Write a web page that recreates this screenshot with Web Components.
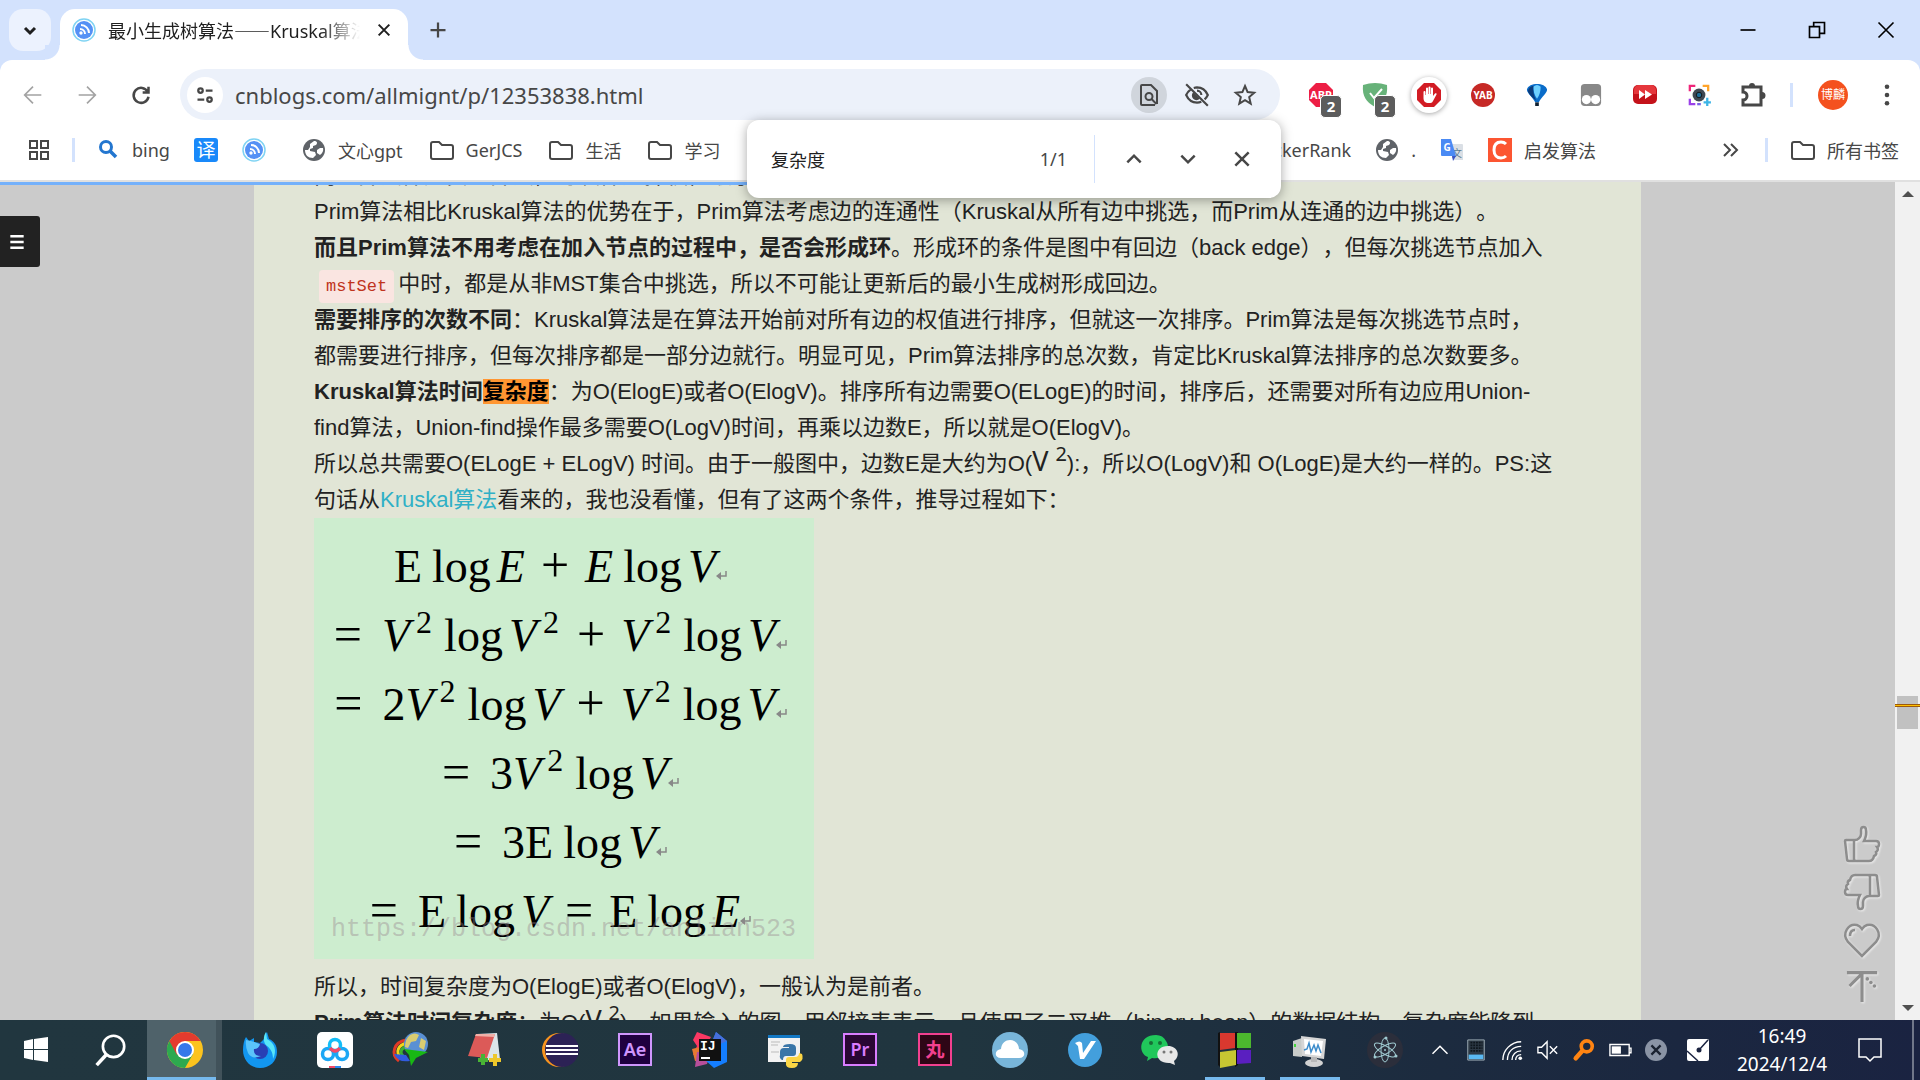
<!DOCTYPE html>
<html lang="zh-CN">
<head>
<meta charset="utf-8">
<title>最小生成树算法——Kruskal算法</title>
<style>
  html, body {
    margin: 0;
    height: 100%;
  }
  body {
    overflow: hidden;
    font-family: "Noto Sans", "Noto Sans CJK SC", sans-serif;
    font-size: 18px;
    color: #1f1f1f;
  }
  .dash {
    font-family: "Noto Sans CJK SC", sans-serif;
  }
</style>
</head>
<body>
<desktop-screen>
  <tab-strip>
    <browser-tab>最小生成树算法<span class="dash">——</span>Kruskal算法</browser-tab>
  </tab-strip>
  <nav-toolbar></nav-toolbar>
  <bookmarks-bar></bookmarks-bar>
  <find-bar></find-bar>
  <page-view>
    <blog-post></blog-post>
  </page-view>
  <task-bar></task-bar>
</desktop-screen>

<script>
(function() {
  // every icon: [viewBox size, markup]
  const line = (w, d) => `<path d="${d}" fill="none" stroke="currentColor" stroke-width="${w}"/>`;
  const icons = {
    chevron: [24, line(3, 'M7 10l5 5 5-5')],
    up: [24, line(3, 'M4 16l8-8 8 8')],
    down: [24, line(3, 'M4 8l8 8 8-8')],
    close: [24, line(3, 'M4 4l16 16M20 4L4 20')],
    winclose: [24, line(2, 'M3 3l18 18M21 3L3 21')],
    plus: [24, line(3, 'M12 2v20M2 12h20')],
    minimize: [24, line(2, 'M3 12h18')],
    restore: [24, line(2, 'M3 8h12v13H3zM8 8V3h13v13h-5')],
    back: [24, line(2, 'M22 12H3M12 2L2 12l10 10')],
    forward: [24, line(2, 'M2 12h19M12 2l10 10-10 10')],
    reload: [24, line(3, 'M20 8a9 9 0 1 0 1 6M21 2v7h-7')],
    tune: [24, line(3, 'M13 6h9M2 18h9') + '<g fill="none" stroke="currentColor" stroke-width="3"><circle cx="6" cy="6" r="3"/><circle cx="18" cy="18" r="3"/></g>'],
    findpage: [24, line(2, 'M18 22H5a1 1 0 0 1-1-1V3a1 1 0 0 1 1-1h9l6 6v13M14.500 16l5 5') + '<circle cx="12" cy="13.500" r="3.500" fill="none" stroke="currentColor" stroke-width="2"/>'],
    eyeoff: [24, line(2, 'M2 2l20 20M9 5.500a11 11 0 0 1 3-.5c4.500 0 8 2.600 10 7a12 12 0 0 1-3 4M6 7a12 12 0 0 0-4 5c2 4.400 5.500 7 10 7a11 11 0 0 0 4-.8M12 8a4 4 0 0 1 4 4') + '<path d="M8.500 9.500a4 4 0 0 0 6 6z" fill="currentColor"/>'],
    star: [24, line(2, 'M12 3l2.600 6.100 6.600.6-5 4.400 1.500 6.500L12 17.200l-5.700 3.400 1.500-6.500-5-4.400 6.600-.6z')],
    apps: [24, line(2, 'M3 3h7v7H3zM14 3h7v7h-7zM3 14h7v7H3zM14 14h7v7h-7z')],
    folder: [24, line(2, 'M1 19V6a2 2 0 0 1 2-2h6l3 3h9a2 2 0 0 1 2 2v10a2 2 0 0 1-2 2H3a2 2 0 0 1-2-2z')],
    globe: [24, '<circle cx="12" cy="12" r="11" fill="#5f6368"/><path d="M12 3c3 0 4 2 2 4l-3 1v2l-3 1v2l5 1 1 3-3 3c-5 0-8-3-8-8h3l2-3V6zM15 12l3-2h3q1 4-3 7l-3-2z" fill="#fff"/>'],
    bing: [24, '<circle cx="10" cy="9" r="5.500" fill="none" stroke="#2376cf" stroke-width="3"/><path d="M14 13l6 6" stroke="#2376cf" stroke-width="3.500"/>'],
    translate: [24, '<rect width="24" height="24" rx="3" fill="#1989fa"/><text x="12" y="19" font-size="19" text-anchor="middle" fill="#fff">译</text>'],
    feed: [24, '<circle cx="12" cy="12" r="11" fill="#fff" stroke="#7fd3f3" stroke-width="1.500"/><circle cx="12" cy="12" r="9" fill="#5591f5"/><g fill="none" stroke="#fff" stroke-width="2"><path d="M8 11a5 5 0 0 1 5 5M9 7a8 8 0 0 1 8 8"/></g><circle cx="9" cy="15" r="1.700" fill="#fff"/>'],
    gtranslate: [24, '<path d="M9 6h13a1 1 0 0 1 1 1v15H13z" fill="#dadfe5"/><text x="17" y="19" font-size="10" text-anchor="middle" fill="#5b7b90">文</text><path d="M1 1h10l5 17H2a1 1 0 0 1-1-1z" fill="#4a8af4"/><path d="M12 18h4l-3 5z" fill="#3a54c4"/><text x="7" y="13" font-size="10" font-weight="700" text-anchor="middle" fill="#fff">G</text>'],
    cbox: [24, '<path fill="#fc5531" d="M0 0h24v24H0z"/><path d="M18 6q-2-2-5-2c-5 0-7 3-7 8s3 8 7 8q3 0 5-2" fill="none" stroke="#fff" stroke-width="3"/>'],
    more: [24, line(2, 'M6 6l6 6-6 6M13 6l6 6-6 6')],
    dots: [24, '<g fill="currentColor"><circle cx="12" cy="3" r="2.500"/><circle cx="12" cy="12" r="2.500"/><circle cx="12" cy="21" r="2.500"/></g>'],
    abp: [24, '<path d="M7 0h10l7 7v10l-7 7H7l-7-7V7z" fill="#ed1e45"/><text x="12" y="16" font-size="11" font-weight="700" text-anchor="middle" fill="#fff">ABP</text>'],
    shield: [24, '<path d="M0 2q12-4 24 0c1 11-3 17-12 22C3 19-1 13 0 2z" fill="#67b279"/><path d="M7 10l4 5 8-9" fill="none" stroke="#fff" stroke-width="2"/>'],
    hand: [24, '<path d="M7 0h10l7 7v10l-7 7H7l-7-7V7z" fill="#d21c24" /><path d="M6.500 12.500V9a1 1 0 0 1 2 0v3h.5V5.500a1 1 0 0 1 2 0V11h.5V4.500a1 1 0 0 1 2 0V11h.5V5.500a1 1 0 0 1 2 0V13l2-2.500c1-.8 2 0 1.500 1L16 18c-1 2-2 2-4 2-4 0-5.500-2-5.500-5z" fill="#fff"/>'],
    yab: [24, '<circle cx="12" cy="12" r="12" fill="#c62926"/><text x="12" y="16" font-size="10" font-weight="700" text-anchor="middle" fill="#fff">YAB</text>'],
    balloon: [24, '<path d="M1 6c2-8 20-8 22 0 0 4-6 8-9 14h-4C7 14 1 10 1 6z" fill="#0a6cc9"/><path d="M8 3q4-4 8 0 0 8-4 13Q8 11 8 3z" fill="#6ed0ff"/><path d="M2 8q1-5 6-6-1 8 3 16Q4 13 2 8z" fill="#0b3c7c"/><path d="M10 20h4v4h-4z" fill="#123"/>'],
    tamper: [24, '<rect x="1" width="22" height="24" rx="4" fill="#888"/><circle cx="7" cy="17" r="5" fill="#fff"/><circle cx="17" cy="17" r="5" fill="#fff"/>'],
    forwardred: [24, '<rect y="2" width="24" height="19" rx="5" fill="#c4121a"/><path d="M1 11V7a5 5 0 0 1 5-5h12a5 5 0 0 1 5 5v4z" fill="#e5373c"/><path d="M6 7l6 4.500L6 16zM12 7l7 4.500-7 4.500z" fill="#fff"/>'],
    camera: [24, '<g fill="none" stroke-width="2.500"><path d="M2 8V2h6" stroke="#f0267a"/><path d="M16 2h6v6" stroke="#ffa42a"/><path d="M2 16v6h6" stroke="#9a40e8"/><path d="M10 22h4" stroke="#7a60e8"/><path d="M21 15v9M17 20h8" stroke="#3db4e6"/></g><circle cx="12" cy="12" r="7" fill="#3f4852"/><circle cx="12" cy="12" r="3" fill="#1e6a96" stroke="#111"/>'],
    puzzle: [24, line(3, 'M2 4h18v18H2v-5a4 4 0 0 0 0-8z') + '<path d="M8 3a3 3 0 0 1 6 0zM21 9a3.500 3.500 0 0 1 0 7z" fill="currentColor"/>'],
    menu: [24, line(3, 'M4 5h16M4 12h16M4 19h16')],
    thumbup: [36, line(2.5, 'M1 15q0-1 1-1h8v21H5q-2 0-2-2zM11 14c3 0 6-3 6-6V4c0-4 5-4 5 0 1 4 0 7-2 11h12q3 0 3 3t-2 3q2 3-1 5 1 3-2 4-1 5-5 5H12q-2 0-2-2')],
    heart: [36, line(2.5, 'M18 34L4 20C-3 11 5 1 13 3q3 1 5 4 2-3 5-4c8-2 16 8 9 17zM6 14q0-6 5-6')],
    totop: [36, line(3.5, 'M1 3h34M18 3v33M18 4L4 18') + '<g fill="currentColor"><circle cx="24" cy="10" r="2"/><circle cx="28" cy="14" r="2"/><circle cx="32" cy="18" r="2"/></g>'],
    enter: [12, '<path d="M10 1v5H3" fill="none" stroke="#888" stroke-width="1.500"/><path d="M0 6l5-4v8z" fill="#888"/>'],
    // taskbar
    start: [36, '<path d="M6 9l9-2v10H6zM16 7l14-2v12H16zM6 18h9v10l-9-2zM16 18h14v12l-14-2z" fill="#fff"/>'],
    search: [36, '<circle cx="22" cy="14" r="12" fill="none" stroke="#fff" stroke-width="3"/><path d="M14 23L3 35" stroke="#fff" stroke-width="4"/>'],
    chrome: [36, '<circle cx="18" cy="18" r="18" fill="#fcc31e"/><path d="M2.400 9A18 18 0 0 0 18 36l8-14-8-4z" fill="#2da94f"/><path d="M2.400 9A18 18 0 0 1 33.600 9H18l-8 14z" fill="#e33b2e"/><circle cx="18" cy="18" r="9" fill="#fff"/><circle cx="18" cy="18" r="7" fill="#3478ea"/>'],
    firefox: [36, '<path d="M18 36C8 36 1 28 1 18c0-5 1-10 3-13l3 4 5-3v4l6 1 5-5c0-3 1-5 2-6l2 7c5 2 8 6 8 13 0 9-7 16-17 16z" fill="#1296f0"/><path d="M24 0l1 7c8 4 10 12 6 20 0-7-3-11-6-13-4-3-4-10-1-14z" fill="#58e5f8"/><circle cx="18" cy="19" r="8" fill="#283fb5"/><path d="M4 8q6 1 14 4-1 5-6 5-1 7 7 7-9 4-13-3-3-7-2-13z" fill="#5bc4fa"/>'],
    netdisk: [36, '<rect width="36" height="36" rx="5" fill="#fff"/><g fill="none" stroke-width="3.500"><circle cx="11" cy="22" r="5.500" stroke="#1ba7f5"/><circle cx="25" cy="22" r="5.500" stroke="#1ba7f5"/><circle cx="18" cy="13" r="5.500" stroke="#14bdf7"/><path d="M13 16q5 6 10 0" stroke="#f34a68"/></g><path d="M12 34h6v2h-6z" fill="#f34a68"/><path d="M18 34h6v2h-6z" fill="#2689f0"/>'],
    idm: [36, '<g fill="none" stroke-width="3"><path d="M14 8C2 10-2 22 7 29" stroke="#e13a26"/><path d="M15 11C6 13 3 20 9 26" stroke="#f3d51a"/><path d="M16 14c-7 2-9 6-5 10" stroke="#3fb134"/></g><path d="M2 22q4 9 16 7l-4-6z" fill="#315ce0"/><circle cx="24" cy="12" r="12" fill="#5a90d4"/><path d="M18 3q5-3 9 0l-3 6-5 1-3 6-3-1q0-8 5-12zM29 6l5 3-2 9-5-3z" fill="#d9cc71"/><path d="M36 20L12 17l5 6 2 11 5-8z" fill="#18b814"/>'],
    notepad: [36, '<path d="M10 2l20-1 3 26-19 2z" fill="#dce5e9"/><path d="M9 2h19l-8 24-19-2z" fill="#dc5a58"/><path d="M9 2h19l-1 3-19-1z" fill="#f0b0a8"/><path d="M16 22v11M11 28h10" stroke="#49b435" stroke-width="4"/><path d="M28 22v12M22 28h12" stroke="#edc72b" stroke-width="4"/>'],
    eclipse: [36, '<circle cx="17" cy="18" r="17" fill="#f7941e"/><circle cx="20" cy="18" r="17" fill="#2c2255"/><path d="M4 13h32v2H4zM4 17h32v2H4zM4 21h32v2H4z" fill="#fff"/>'],
    ae: [36, '<path d="M2 2h32v31H2z" fill="#1f0040" stroke="#cf96fd" stroke-width="2"/><text x="18" y="24" font-size="18" font-weight="600" text-anchor="middle" fill="#cf96fd">Ae</text>'],
    pr: [36, '<path d="M2 2h32v31H2z" fill="#2a0634" stroke="#d97dff" stroke-width="2"/><text x="18" y="24" font-size="18" font-weight="600" text-anchor="middle" fill="#d97dff">Pr</text>'],
    wan: [36, '<path d="M2 2h32v31H2z" fill="#2e0616" stroke="#f2408f" stroke-width="2"/><text x="18" y="25" font-size="19" font-weight="700" text-anchor="middle" fill="#f2408f">丸</text>'],
    idea: [36, '<path d="M5 0l14 5-9 16-9 2 4-9-4-6z" fill="#fc3863"/><path d="M0 17l8-2v14H3z" fill="#e77a32"/><path d="M5 20h14l-4 12-12 3z" fill="#b74f9a"/><path d="M24 0l11 9v21l-13 6-9-8z" fill="#147eff"/><path d="M24 0l11 9-18 8z" fill="#466fdb"/><path d="M7 7h22v22H7z" fill="#111"/><text x="8" y="18" font-size="13" font-weight="700" fill="#fff" font-family="Liberation Mono">IJ</text><path d="M9 25h9v2H9z" fill="#fff"/>'],
    python: [36, '<path d="M1 3h32v27H1z" fill="#f2f2f2"/><path d="M1 3h32v3H1z" fill="#1378c4"/><path d="M4 10h9M4 13h7M4 20h8" stroke="#bbb"/><path d="M13 23v-3q0-4 4-4h5v-1h-6q0-3 7-3 6 0 6 4v5q0 3-3 3h-7q-3 0-3 4h-1q-3-2-2-5z" fill="#3a76a8"/><path d="M35 22q2 5-2 8h-8v1h6q0 5-6 5-7 0-6-5v-3q0-3 3-3h6q4 0 4-4z" fill="#fbd544"/>'],
    cloud: [36, '<circle cx="18" cy="18" r="18" fill="#78b5d9"/><path d="M9 26c-7 0-7-8 0-9 1-12 17-12 18 0 7 1 7 9 0 9z" fill="#fff"/>'],
    vee: [36, '<circle cx="18" cy="18" r="17" fill="#439fdc"/><path d="M8 11q5-3 7 0l1 10 8-12h5L17 27h-4L11 14z" fill="#fff"/>'],
    wechat: [36, '<path d="M14 3C-4 3-4 22 6 25l-1 4 5-3c15 2 19-10 14-17q-3-6-10-6z" fill="#20c75b"/><circle cx="9" cy="11" r="2" fill="#176d36"/><circle cx="18" cy="11" r="2" fill="#176d36"/><path d="M26 14c-15 0-14 18 2 17l5 2-1-4c7-5 4-15-6-15z" fill="#e7e7e7"/><circle cx="22" cy="20" r="1.500" fill="#777"/><circle cx="29" cy="20" r="1.500" fill="#777"/>'],
    cubes: [36, '<path d="M1 1l2-1v35l-2-2zM18 0h3v33l-3 2z" fill="#111"/><path d="M3 1h15v15l-15 2z" fill="#d9382f"/><path d="M20 1h14v15H20z" fill="#4cb82e"/><path d="M3 20l16-2v15L3 36z" fill="#c6c632"/><path d="M20 18h14v13l-14 1z" fill="#5a1fc0"/>'],
    monitor: [36, '<path d="M1 9l9-3v19l-9-1z" fill="#c8cbc9"/><path d="M2 12h2v3H2z" fill="#43d43d"/><path d="M9 4l25 3-2 20-22-3z" fill="#d6d6d6"/><path d="M12 7l19 2-2 15-16-2z" fill="#fff"/><path d="M12 18l3-1 2-6 2 9 3-7 2 6 2-6 3 8" fill="none" stroke="#3c8ccb" stroke-width="1.500"/><ellipse cx="22" cy="31" rx="9" ry="4" fill="#d2d2d2"/><path d="M19 25h6v5h-6z" fill="#b8b8b8"/>'],
    electron: [36, '<circle cx="18" cy="18" r="18" fill="#2b2e3b"/><g fill="none" stroke="#9fc9d0"><ellipse cx="18" cy="18" rx="12" ry="4" transform="rotate(30 18 18)"/><ellipse cx="18" cy="18" rx="12" ry="4" transform="rotate(-30 18 18)"/><ellipse cx="18" cy="18" rx="4" ry="12"/></g><g fill="#9fc9d0"><circle cx="18" cy="18" r="1"/><circle cx="19" cy="6" r="1.500"/><circle cx="8" cy="25" r="1.500"/><circle cx="29" cy="24" r="1.500"/></g>'],
    caret: [24, line(2, 'M2 17L12 7l10 10')],
    tablet: [24, '<path d="M3 1h18v22H3z" fill="#2c3844" stroke="#a4b4bc"/><path d="M4 17h16v5H4z" fill="#5ab9f2"/><path d="M6 4h13M6 7h13M6 10h13M6 13h13" stroke="#0e161d" stroke-width="2" stroke-dasharray="2 1"/>'],
    wifi: [24, line(1.500, 'M2 23C2 12 11 3 22 3M7 23C7 14 13 8 22 8M12 23c0-6 4-10 10-10M16 23c0-3 2-6 6-6') + '<circle cx="21" cy="21" r="2" fill="currentColor"/>'],
    mute: [24, line(1.500, 'M1 9h4l6-6v18l-6-6H1zM14 8l8 8M22 8l-8 8')],
    finder: [24, '<circle cx="15" cy="8" r="6" fill="none" stroke="#ff8412" stroke-width="4"/><path d="M10 13L3 21" stroke="#ff8412" stroke-width="5" stroke-linecap="round"/>'],
    battery: [24, line(1.500, 'M1 6h21v12H1zM22 10h2v5h-2') + '<path d="M3 8h10v8H3z" fill="#fff"/>'],
    xmark: [24, '<circle cx="12" cy="12" r="12" fill="#8a94a5"/><path d="M7 7l10 10M17 7L7 17" stroke="#1a2230" stroke-width="2.500"/>'],
    pen: [24, '<rect x="1" y="1" width="22" height="22" rx="2" fill="#fff"/><path d="M1 13l11 10M13 12l9-10" stroke="#1a2340" stroke-width="1.500"/><circle cx="13" cy="12" r="2.500" fill="#1a2340"/>'],
    notice: [24, line(1.500, 'M1 1h22v18h-7l-4 4-4-4H1z')]
  };

  // small helper: one class per tag, markup cloned from a template
  function define(tag, markup) {
    const template = document.createElement('template');
    template.innerHTML = markup;
    customElements.define(tag, class extends HTMLElement {
      constructor() {
        super();
        this.attachShadow({mode: 'open'});
        this.shadowRoot.appendChild(template.content.cloneNode(true));
      }
    });
  }

  const plainButton = `
    button {
      display: flex;
      align-items: center;
      justify-content: center;
      border: 0;
      padding: 0;
      background: none;
      color: inherit;
      font: inherit;
    }
  `;

  customElements.define('ui-icon', class UiIcon extends HTMLElement {
    constructor() {
      super();
      this.attachShadow({mode: 'open'});
    }

    connectedCallback() {
      const [box, art] = icons[this.getAttribute('name')];
      const size = this.getAttribute('size') || 24;
      this.shadowRoot.innerHTML = `
        <style>
          :host { display: inline-flex; flex: none; }
          svg { display: block; overflow: visible; }
        </style>
        <svg width="${size}" height="${size}" viewBox="0 0 ${box} ${box}" aria-hidden="true">${art}</svg>
      `;
    }
  });

  define('desktop-screen', `
    <style>
      :host {
        display: flex;
        flex-direction: column;
        height: 100vh;
        position: relative;
        overflow: hidden;
        background: #d3e2fd;
      }
      ::slotted(page-view) { flex: 1; min-height: 0; }
    </style>
    <slot></slot>
  `);

  define('tab-strip', `
    <style>
      :host {
        display: flex;
        height: 60px;
        box-sizing: border-box;
        padding-left: 9px;
        background: #d3e2fd;
      }
      ${plainButton}
      .list {
        width: 42px;
        height: 42px;
        margin: 9px 9px 0 0;
        border-radius: 14px;
        background: #ecf2fe;
      }
      .new { width: 60px; height: 60px; color: #474747; }
      .window { display: flex; margin-left: auto; color: #000; }
      .window button { width: 69px; height: 60px; }
    </style>
    <button class="list" aria-label="搜索标签页"><ui-icon name="chevron"></ui-icon></button>
    <slot></slot>
    <button class="new" aria-label="新标签页"><ui-icon name="plus" size="18"></ui-icon></button>
    <div class="window">
      <button aria-label="最小化"><ui-icon name="minimize" size="20"></ui-icon></button>
      <button aria-label="还原"><ui-icon name="restore" size="20"></ui-icon></button>
      <button aria-label="关闭"><ui-icon name="winclose" size="20"></ui-icon></button>
    </div>
  `);

  define('browser-tab', `
    <style>
      :host {
        display: flex;
        align-items: center;
        gap: 12px;
        width: 348px;
        height: 51px;
        box-sizing: border-box;
        margin-top: 9px;
        padding: 0 12px 9px 12px;
        border-radius: 15px 15px 0 0;
        background: #fff;
        position: relative;
      }
      /* flared feet of the active tab */
      :host::before, :host::after {
        content: "";
        position: absolute;
        bottom: 0;
        width: 15px;
        height: 15px;
      }
      :host::before { right: 100%; background: radial-gradient(circle at 0 0, #d3e2fd 14px, #fff 15px); }
      :host::after { left: 100%; background: radial-gradient(circle at 100% 0, #d3e2fd 14px, #fff 15px); }
      ${plainButton}
      .title {
        flex: 1;
        overflow: hidden;
        white-space: nowrap;
        -webkit-mask-image: linear-gradient(to left, transparent, #000 40px);
      }
      button { width: 24px; height: 24px; }
    </style>
    <ui-icon name="feed"></ui-icon>
    <span class="title"><slot></slot></span>
    <button aria-label="关闭标签页"><ui-icon name="close" size="16"></ui-icon></button>
  `);

  define('nav-toolbar', `
    <style>
      :host {
        display: flex;
        align-items: center;
        height: 69px;
        box-sizing: border-box;
        padding: 0 8px 0 6px;
        border-radius: 12px 12px 0 0;
        background: #fff;
        color: #474747;
      }
      ${plainButton}
      .nav { width: 54px; height: 50px; }
      .nav[disabled] { color: #a3a3a3; }
      .box {
        flex: 1;
        display: flex;
        align-items: center;
        height: 51px;
        margin-left: 12px;
        border-radius: 26px;
        background: #ecf1fa;
      }
      .site {
        width: 36px;
        height: 36px;
        margin: 0 12px 0 7px;
        border-radius: 50%;
        background: #fff;
      }
      input {
        flex: 1;
        min-width: 0;
        border: 0;
        padding: 0;
        background: none;
        font: inherit;
        font-size: 22px;
        color: #474747;
      }
      .act { width: 36px; height: 36px; margin-right: 12px; border-radius: 50%; }
      .act.on { background: #d0d5dc; }
      .act.last { margin-right: 17px; }
      .ext { width: 54px; height: 54px; position: relative; }
      .exts { display: flex; margin-left: 14px; }
      .ext b {
        position: absolute;
        left: 26px;
        top: 27px;
        width: 20px;
        height: 21px;
        border: 1px solid #fff;
        border-radius: 5px;
        background: #5c5c5c;
        color: #fff;
        font-size: 15px;
        line-height: 21px;
      }
      .disc {
        display: flex;
        padding: 6px;
        border-radius: 50%;
        background: #fff;
        box-shadow: 0 1px 5px rgba(0, 0, 0, .35);
      }
      .sep { width: 3px; height: 24px; margin: 0 11px 0 10px; background: #d3e2fd; }
      .avatar { width: 58px; }
      .avatar span {
        width: 30px;
        line-height: 30px;
        border-radius: 50%;
        background: #f4511e;
        color: #fff;
        font-size: 12px;
      }
      .dots { width: 50px; height: 50px; }
    </style>
    <button class="nav" disabled aria-label="后退"><ui-icon name="back" size="20"></ui-icon></button>
    <button class="nav" disabled aria-label="前进"><ui-icon name="forward" size="20"></ui-icon></button>
    <button class="nav" aria-label="重新加载"><ui-icon name="reload" size="20"></ui-icon></button>
    <div class="box">
      <button class="site" aria-label="网站信息"><ui-icon name="tune" size="18"></ui-icon></button>
      <input aria-label="地址" value="cnblogs.com/allmignt/p/12353838.html">
      <button class="act on" aria-label="查找"><ui-icon name="findpage"></ui-icon></button>
      <button class="act" aria-label="隐藏"><ui-icon name="eyeoff" size="26"></ui-icon></button>
      <button class="act last" aria-label="收藏"><ui-icon name="star"></ui-icon></button>
    </div>
    <div class="exts">
      <button class="ext"><ui-icon name="abp"></ui-icon><b>2</b></button>
      <button class="ext"><ui-icon name="shield"></ui-icon><b>2</b></button>
      <button class="ext"><span class="disc"><ui-icon name="hand"></ui-icon></span></button>
      <button class="ext"><ui-icon name="yab"></ui-icon></button>
      <button class="ext"><ui-icon name="balloon" size="22"></ui-icon></button>
      <button class="ext"><ui-icon name="tamper" size="22"></ui-icon></button>
      <button class="ext"><ui-icon name="forwardred"></ui-icon></button>
      <button class="ext"><ui-icon name="camera" size="22"></ui-icon></button>
      <button class="ext"><ui-icon name="puzzle"></ui-icon></button>
    </div>
    <span class="sep"></span>
    <button class="avatar"><span>博麟</span></button>
    <button class="dots" aria-label="菜单"><ui-icon name="dots" size="22"></ui-icon></button>
  `);

  define('book-mark', `
    <style>
      :host { display: inline-flex; }
      a {
        display: flex;
        align-items: center;
        gap: 12px;
        color: inherit;
        text-decoration: none;
        white-space: nowrap;
      }
    </style>
    <a href="#"><slot name="icon"></slot><slot></slot></a>
  `);

  const mark = (icon, text) => `<book-mark><ui-icon slot="icon" name="${icon}"></ui-icon>${text ? `<span>${text}</span>` : ''}</book-mark>`;

  define('bookmarks-bar', `
    <style>
      :host {
        display: flex;
        align-items: center;
        height: 53px;
        box-sizing: border-box;
        padding: 0 21px 9px 27px;
        border-bottom: 2px solid #e0e0e0;
        background: #fff;
        color: #474747;
      }
      div { display: flex; align-items: center; gap: 24px; }
      .left { flex: 1; min-width: 0; gap: 36px; }
      .left div { gap: 27px; }
      .left .pinned { gap: 24px; }
      .mid { margin-right: 122px; }
      .sep { width: 3px; height: 24px; background: #d3e2fd; }
      .pinned .sep { margin: 0 -3px; }
      .all { gap: 23px; }
    </style>
    <div class="left">
      <div class="pinned">
        ${mark('apps', '')}
        <span class="sep"></span>
        ${mark('bing', 'bing')}
        ${mark('translate', '')}
        ${mark('feed', '')}
      </div>
      <div>
        ${mark('globe', '文心gpt')}
        ${mark('folder', 'GerJCS')}
        ${mark('folder', '生活')}
        ${mark('folder', '学习')}
      </div>
    </div>
    <div class="mid">
      ${mark('globe', 'HackerRank')}
      ${mark('globe', '.')}
      ${mark('gtranslate', '')}
      ${mark('cbox', '启发算法')}
    </div>
    <div class="all">
      <ui-icon name="more"></ui-icon>
      <span class="sep"></span>
      ${mark('folder', '所有书签')}
    </div>
  `);

  define('find-bar', `
    <style>
      :host {
        display: flex;
        align-items: center;
        position: absolute;
        z-index: 5;
        top: 120px;
        right: 639px;
        width: 534px;
        height: 78px;
        box-sizing: border-box;
        padding: 0 12px 0 24px;
        border-radius: 12px;
        background: #fff;
        box-shadow: 0 2px 12px rgba(0, 0, 0, .35);
      }
      ${plainButton}
      input {
        flex: 1;
        min-width: 0;
        border: 0;
        padding: 0;
        font: inherit;
        color: #1f1f1f;
      }
      output { color: #474747; }
      i { width: 1px; height: 48px; margin: 0 12px 0 27px; background: #d3e2fd; }
      button { width: 54px; height: 54px; color: #474747; }
    </style>
    <input aria-label="在网页中查找" value="复杂度">
    <output>1/1</output>
    <i></i>
    <button aria-label="上一个"><ui-icon name="up" size="20"></ui-icon></button>
    <button aria-label="下一个"><ui-icon name="down" size="20"></ui-icon></button>
    <button aria-label="关闭"><ui-icon name="close" size="20"></ui-icon></button>
  `);

  define('page-view', `
    <style>
      :host {
        display: flex;
        position: relative;
        overflow: hidden;
        background: #cbcbcb;
      }
      ${plainButton}
      .content { flex: 1; min-width: 0; overflow: hidden; }
      .progress {
        position: absolute;
        top: 0;
        left: 0;
        width: 750px;
        height: 3px;
        background: #74b1fb;
      }
      .menu {
        position: absolute;
        left: 0;
        top: 34px;
        width: 40px;
        height: 51px;
        padding-right: 6px;
        border-radius: 0 3px 3px 0;
        background: #222;
        color: #fff;
      }
      .tools {
        position: absolute;
        right: 40px;
        bottom: 18px;
        display: grid;
        gap: 12px;
        color: #8d8d8d;
        filter: drop-shadow(1px 1px 1px #eee);
      }
      .flip { transform: rotate(180deg); }
      .scroll {
        width: 25px;
        display: flex;
        flex-direction: column;
        align-items: center;
        justify-content: space-between;
        box-sizing: border-box;
        padding: 9px 0;
        background: #f1f1f1;
        position: relative;
      }
      .arrow { border: 6px solid transparent; border-top: 0; border-bottom-color: #505050; }
      .arrow.down { border-top: 6px solid #505050; border-bottom: 0; }
      .thumb {
        position: absolute;
        top: 514px;
        left: 2px;
        width: 21px;
        height: 33px;
        background: #c1c1c1;
      }
      .hit {
        position: absolute;
        top: 522px;
        left: 0;
        width: 25px;
        height: 1px;
        border: 1px solid #9c5a0c;
        border-width: 1px 0;
        background: #ffc000;
      }
    </style>
    <div class="content"><slot></slot></div>
    <div class="scroll">
      <span class="arrow"></span>
      <span class="thumb"></span>
      <span class="hit"></span>
      <span class="arrow down"></span>
    </div>
    <span class="progress"></span>
    <button class="menu" aria-label="目录"><ui-icon name="menu" size="20"></ui-icon></button>
    <div class="tools">
      <button aria-label="推荐"><ui-icon name="thumbup" size="36"></ui-icon></button>
      <button class="flip" aria-label="反对"><ui-icon name="thumbup" size="36"></ui-icon></button>
      <button aria-label="收藏"><ui-icon name="heart" size="36"></ui-icon></button>
      <button aria-label="返回顶部"><ui-icon name="totop" size="32"></ui-icon></button>
    </div>
  `);

  define('math-steps', `
    <style>
      :host {
        display: flex;
        flex-direction: column;
        align-items: center;
        position: relative;
        width: 500px;
        height: 441px;
        box-sizing: border-box;
        padding: 13px 6px 0 0;
        background: #cdedcf;
        color: #000;
        font-family: "Liberation Serif", serif;
        font-size: 46px;
        line-height: 69px;
      }
      div { display: flex; align-items: baseline; height: 69px; }
      .log { margin: 0 6px 0 10px; }
      .op, .eq { font-size: 50px; }
      .op { margin: 0 16px; }
      .eq { margin-right: 20px; }
      sup {
        position: relative;
        top: -18px;
        margin: 0 2px 0 6px;
        font-size: 32px;
        line-height: 0;
        vertical-align: baseline;
      }
      .mark {
        position: absolute;
        left: 17px;
        bottom: 13px;
        color: rgba(150, 130, 140, .4);
        font-family: "Liberation Mono", monospace;
        font-size: 25px;
        line-height: 32px;
      }
    </style>
    <div>E<span class="log">log</span><i>E</i><span class="op">+</span><i>E</i><span class="log">log</span><i>V</i><ui-icon name="enter" size="12"></ui-icon></div>
    <div><span class="eq">=</span><i>V</i><sup>2</sup><span class="log">log</span><i>V</i><sup>2</sup><span class="op">+</span><i>V</i><sup>2</sup><span class="log">log</span><i>V</i><ui-icon name="enter" size="12"></ui-icon></div>
    <div><span class="eq">=</span>2<i>V</i><sup>2</sup><span class="log">log</span><i>V</i><span class="op">+</span><i>V</i><sup>2</sup><span class="log">log</span><i>V</i><ui-icon name="enter" size="12"></ui-icon></div>
    <div><span class="eq">=</span>3<i>V</i><sup>2</sup><span class="log">log</span><i>V</i><ui-icon name="enter" size="12"></ui-icon></div>
    <div><span class="eq">=</span>3E<span class="log">log</span><i>V</i><ui-icon name="enter" size="12"></ui-icon></div>
    <div><span class="eq">=</span>E<span class="log">log</span><i>V</i><span class="op">=</span>E<span class="log">log</span><i>E</i><ui-icon name="enter" size="12"></ui-icon></div>
    <span class="mark">https://blog.csdn.net/anlian523</span>
  `);

  define('blog-post', `
    <style>
      :host {
        display: flow-root;
        margin: 0 254px;
        padding-left: 60px;
        background: #e1e5d6;
        color: #222;
        font-family: "Liberation Sans", "Noto Sans CJK SC", sans-serif;
        font-size: 22px;
        line-height: 36px;
        white-space: nowrap;
        text-spacing-trim: space-all;
      }
      /* the view is scrolled part way into the first line */
      article { margin-top: -24px; }
      p { margin: 0; }
      a { color: #2fb0c6; text-decoration: none; }
      mark { background: #ff9632; color: #000; }
      code {
        margin: 0 4px 0 5px;
        padding: 7px;
        border-radius: 4px;
        background: #fae5e1;
        color: #c0341d;
        font-family: "Liberation Mono", monospace;
        font-size: 17px;
        line-height: 20px;
      }
      .v { font-family: "Noto Sans", sans-serif; font-size: 27px; line-height: 0; }
      .v sup { font-size: 20px; line-height: 0; }
      math-steps { margin: 0 0 10px; }
    </style>
    <article>
      <p>两个算法都是贪心算法，每次都选择权值最小的边，直到所有的节点都被加入到最小生成树中。</p>
      <p>Prim算法相比Kruskal算法的优势在于，Prim算法考虑边的连通性（Kruskal从所有边中挑选，而Prim从连通的边中挑选）。<br>
      <strong>而且Prim算法不用考虑在加入节点的过程中，是否会形成环</strong>。形成环的条件是图中有回边（back edge），但每次挑选节点加入<br>
      <code>mstSet</code>中时，都是从非MST集合中挑选，所以不可能让更新后的最小生成树形成回边。</p>
      <p><strong>需要排序的次数不同</strong>：Kruskal算法是在算法开始前对所有边的权值进行排序，但就这一次排序。Prim算法是每次挑选节点时，<br>
      都需要进行排序，但每次排序都是一部分边就行。明显可见，Prim算法排序的总次数，肯定比Kruskal算法排序的总次数要多。</p>
      <p><strong>Kruskal算法时间<mark>复杂度</mark></strong>：为O(ElogE)或者O(ElogV)。排序所有边需要O(ELogE)的时间，排序后，还需要对所有边应用Union-<br>
      find算法，Union-find操作最多需要O(LogV)时间，再乘以边数E，所以就是O(ElogV)。</p>
      <p>所以总共需要O(ELogE + ELogV) 时间。由于一般图中，边数E是大约为O(<span class="v">V <sup>2</sup></span>):，所以O(LogV)和 O(LogE)是大约一样的。PS:这<br>
      句话从<a href="#">Kruskal算法</a>看来的，我也没看懂，但有了这两个条件，推导过程如下：</p>
      <math-steps></math-steps>
      <p>所以，时间复杂度为O(ElogE)或者O(ElogV)，一般认为是前者。</p>
      <p><strong>Prim算法时间复杂度</strong>：为O(<span class="v">V <sup>2</sup></span>)，如果输入的图，用邻接表表示，且使用了二叉堆（binary heap）的数据结构，复杂度能降到</p>
    </article>
  `);

  const app = (name, cls) => `<button class="app ${cls || ''}"><ui-icon name="${name}" size="36"></ui-icon></button>`;

  define('task-bar', `
    <style>
      :host {
        display: flex;
        height: 60px;
        background: linear-gradient(90deg, #21363f, #20353f 50%, #1c2b3f 75%, #1a2341);
        color: #fff;
      }
      ${plainButton}
      button { height: 60px; box-sizing: border-box; }
      .start { width: 72px; }
      .find { width: 75px; }
      .app { width: 75px; }
      .active {
        border-right: 6px solid #41525a;
        background: linear-gradient(#76b9ed, #76b9ed) bottom / 100% 3px no-repeat, #4f626a;
        padding-left: 7px;
      }
      .open { background: linear-gradient(#76b9ed, #76b9ed) bottom / 60px 3px no-repeat; }
      .tray { display: flex; margin-left: auto; }
      .tray button { width: 36px; }
      .tray .ink { width: 48px; }
      .tray .clock { width: 120px; font-size: 19px; line-height: 28px; }
      .tray .notice { width: 56px; }
      .edge { width: 14px; border-right: 2px solid #707789; margin-right: 6px; }
    </style>
    <button class="start" aria-label="开始"><ui-icon name="start" size="36"></ui-icon></button>
    <button class="find" aria-label="搜索"><ui-icon name="search" size="32"></ui-icon></button>
    ${app('chrome', 'active')}
    ${['firefox', 'netdisk', 'idm', 'notepad', 'eclipse', 'ae', 'idea', 'python', 'pr', 'wan', 'cloud', 'vee', 'wechat'].map(n => app(n)).join('')}
    ${app('cubes', 'open')}
    ${app('monitor', 'open')}
    ${app('electron')}
    <div class="tray">
      <button><ui-icon name="caret" size="18"></ui-icon></button>
      <button><ui-icon name="tablet" size="22"></ui-icon></button>
      <button><ui-icon name="wifi" size="22"></ui-icon></button>
      <button><ui-icon name="mute" size="22"></ui-icon></button>
      <button><ui-icon name="finder" size="22"></ui-icon></button>
      <button><ui-icon name="battery" size="22"></ui-icon></button>
      <button><ui-icon name="xmark" size="22"></ui-icon></button>
      <button class="ink"><ui-icon name="pen" size="24"></ui-icon></button>
      <button class="clock"><span>16:49<br>2024/12/4</span></button>
      <button class="notice"><ui-icon name="notice"></ui-icon></button>
      <span class="edge"></span>
    </div>
  `);
})();
</script>
</body>
</html>
